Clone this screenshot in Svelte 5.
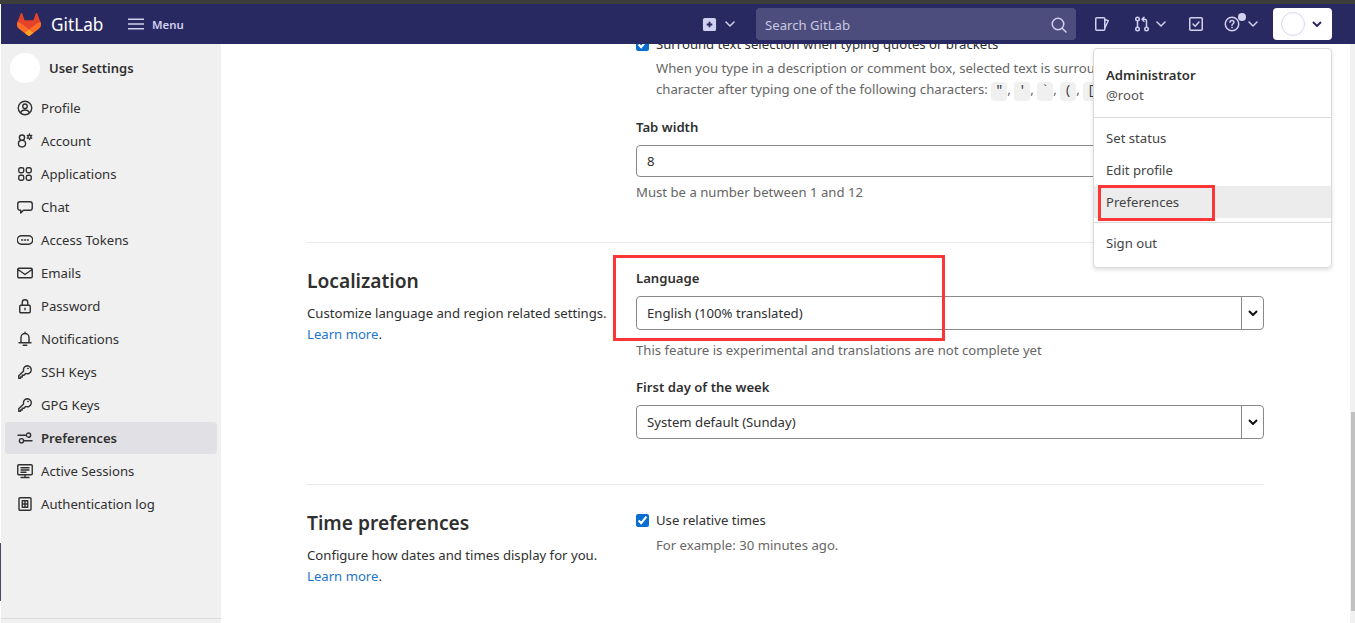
<script>
  const nav = [
    { label: "Profile", d: "M8 1.25a6.75 6.75 0 1 0 0 13.5 6.75 6.75 0 0 0 0-13.5zM8 4a2.25 2.25 0 1 1 0 4.5A2.25 2.25 0 0 1 8 4zM3.8 12.6C4.4 10.8 6 10 8 10s3.6.8 4.2 2.6" },
    { label: "Account", d: "M5 2a2.6 2.6 0 1 0 0 5.2A2.6 2.6 0 0 0 5 2zM5 7.2c-2.4 0-3.6 1.5-3.6 3.4 0 2 1 3.4 3.6 3.4s3.6-1.4 3.6-3.4c0-1.9-1.2-3.4-3.6-3.4zM12.5 2.2a1.6 1.6 0 1 0 0 3.2 1.6 1.6 0 0 0 0-3.2zM12.5 1v1.2M12.5 5.4v1.2M10.3 2.4l1 .6M13.7 4.6l1 .6M10.3 5.2l1-.6M13.7 3l1-.6" },
    { label: "Applications", d: "M3.5 1.75h1.5a1.75 1.75 0 0 1 1.75 1.75V5A1.75 1.75 0 0 1 5 6.75H3.5A1.75 1.75 0 0 1 1.75 5V3.5A1.75 1.75 0 0 1 3.5 1.75zM11 1.75h1.5a1.75 1.75 0 0 1 1.75 1.75V5a1.75 1.75 0 0 1-1.75 1.75H11A1.75 1.75 0 0 1 9.25 5V3.5A1.75 1.75 0 0 1 11 1.75zM3.5 9.25H5A1.75 1.75 0 0 1 6.75 11v1.5A1.75 1.75 0 0 1 5 14.25H3.5a1.75 1.75 0 0 1-1.75-1.75V11A1.75 1.75 0 0 1 3.5 9.25zM11 9.25h1.5A1.75 1.75 0 0 1 14.25 11v1.5a1.75 1.75 0 0 1-1.75 1.75H11a1.75 1.75 0 0 1-1.75-1.75V11A1.75 1.75 0 0 1 11 9.25z" },
    { label: "Chat", d: "M3 2.75h10A2.25 2.25 0 0 1 15.25 5v4A2.25 2.25 0 0 1 13 11.25H6.5L3.75 14v-2.75H3A2.25 2.25 0 0 1 .75 9V5A2.25 2.25 0 0 1 3 2.75z" },
    { label: "Access Tokens", d: "M4.5 3.75h7a4.25 4.25 0 0 1 0 8.5h-7a4.25 4.25 0 0 1 0-8.5zM4.6 8h1M7.5 8h1M10.4 8h1" },
    { label: "Emails", d: "M2 3.25h12c.7 0 1.25.55 1.25 1.25v7c0 .7-.55 1.25-1.25 1.25H2c-.7 0-1.25-.55-1.25-1.25v-7c0-.7.55-1.25 1.25-1.25zM1 4.5L8 9.5l7-5" },
    { label: "Password", d: "M3.75 7.25h8.5c.55 0 1 .45 1 1v5.5c0 .55-.45 1-1 1h-8.5c-.55 0-1-.45-1-1v-5.5c0-.55.45-1 1-1zM5.25 7.25V4.5a2.75 2.75 0 0 1 5.5 0v2.75M8 10.25v1.5" },
    { label: "Notifications", d: "M8 1.25v.75M4 11.75V6.5a4 4 0 0 1 8 0v5.25M2 11.75h12M6.25 14.25h3.5" },
    { label: "SSH Keys", d: "M10.25 1.75a4 4 0 1 1-1.6 7.66L7 11.25H5.25V13H3.5v1.25H1.75v-2.5l4.84-4.84a4 4 0 0 1 3.66-5.16zM10.75 4.5h.5" },
    { label: "GPG Keys", d: "M10.25 1.75a4 4 0 1 1-1.6 7.66L7 11.25H5.25V13H3.5v1.25H1.75v-2.5l4.84-4.84a4 4 0 0 1 3.66-5.16zM10.75 4.5h.5" },
    { label: "Preferences", d: "M1 5.25h8.5M11.5 3a2 2 0 1 0 0 4.25 2 2 0 0 0 0-4.25zM6.5 10.75H15M4.5 8.6a2.1 2.1 0 1 0 0 4.25 2.1 2.1 0 0 0 0-4.25z", active: true },
    { label: "Active Sessions", d: "M1.75 1.75h12.5c.55 0 1 .45 1 1v8c0 .55-.45 1-1 1H1.75c-.55 0-1-.45-1-1v-8c0-.55.45-1 1-1zM4 4.75h8M4 7h8M4 9.25h5M8 11.75v2.5M4 14.5h8" },
    { label: "Authentication log", d: "M3 1.75h10c.55 0 1 .45 1 1v10.5c0 .55-.45 1-1 1H3c-.55 0-1-.45-1-1V2.75c0-.55.45-1 1-1zM5.25 4.75h5.5v6.5h-5.5zM8 4.75v6.5M5.25 8h5.5" }
  ];
  const chars = ['"', "'", "`", "(", "["];
</script>

<div class="strip"></div>
<header class="navbar">
  <div class="brand">
    <svg class="logo" viewBox="0 0 25 24" width="24" height="23">
      <path fill="#e24329" d="M24.507 9.5l-.034-.09L21.082.562a.896.896 0 00-1.694.091l-2.29 7.01H7.825L5.535.653a.898.898 0 00-1.694-.09L.451 9.411.416 9.5a6.297 6.297 0 002.09 7.278l.012.01.03.022 5.16 3.867 2.56 1.935 1.554 1.176a1.051 1.051 0 001.268 0l1.555-1.176 2.56-1.935 5.197-3.89.014-.01A6.297 6.297 0 0024.507 9.5z"/>
      <path fill="#fc6d26" d="M24.507 9.5l-.034-.09a11.44 11.44 0 00-4.56 2.051l-7.447 5.632 4.742 3.584 5.197-3.89.014-.01A6.297 6.297 0 0024.507 9.5z"/>
      <path fill="#fca326" d="M7.707 20.677l2.56 1.935 1.555 1.176a1.051 1.051 0 001.268 0l1.555-1.176 2.56-1.935-4.743-3.584-4.755 3.584z"/>
      <path fill="#fc6d26" d="M5.01 11.461a11.43 11.43 0 00-4.56-2.05L.416 9.5a6.297 6.297 0 002.09 7.278l.012.01.03.022 5.16 3.867 4.745-3.584-7.444-5.632z"/>
    </svg>
    <span class="wordmark">GitLab</span>
  </div>
  <button class="menu-btn">
    <svg viewBox="0 0 16 16" width="16" height="16" class="stroke"><path d="M0 3.25h16M0 8h16M0 12.75h16"/></svg>
    <span>Menu</span>
  </button>

  <div class="nav-right">
    <span class="nav-item plus">
      <svg viewBox="0 0 16 16" width="15" height="15"><path fill="#d1d0ee" fill-rule="evenodd" d="M3 1h10a2 2 0 0 1 2 2v10a2 2 0 0 1-2 2H3a2 2 0 0 1-2-2V3a2 2 0 0 1 2-2zm4 4v2H5v2h2v2h2V9h2V7H9V5H7z"/></svg>
      <svg viewBox="0 0 10 6" width="10" height="6" class="stroke chev"><path d="M1 1l4 4 4-4"/></svg>
    </span>
    <div class="search">
      <span>Search GitLab</span>
      <svg viewBox="0 0 16 16" width="16" height="16" class="stroke"><path d="M7 1.25a5.75 5.75 0 1 0 0 11.5 5.75 5.75 0 0 0 0-11.5zM11.2 11.2l3.8 3.8"/></svg>
    </div>
    <span class="nav-item issues">
      <svg viewBox="0 0 16 16" width="16" height="16" class="stroke"><path d="M2.75 1.75h7c.55 0 1 .45 1 1v10.5c0 .55-.45 1-1 1h-7c-.55 0-1-.45-1-1V2.75c0-.55.45-1 1-1zM10.75 3.5l3.5 1.25-3.5 7.5"/></svg>
    </span>
    <span class="nav-item mrs">
      <svg viewBox="0 0 16 16" width="16" height="16" class="stroke"><path d="M3.5 1.25a1.75 1.75 0 1 0 0 3.5 1.75 1.75 0 0 0 0-3.5zM3.5 11.25a1.75 1.75 0 1 0 0 3.5 1.75 1.75 0 0 0 0-3.5zM12.5 11.25a1.75 1.75 0 1 0 0 3.5 1.75 1.75 0 0 0 0-3.5zM3.5 4.75v6.5M12.5 11.25V5c0-1-.7-1.75-1.75-1.75H8M10 1.25l-2 2 2 2"/></svg>
      <svg viewBox="0 0 10 6" width="10" height="6" class="stroke chev"><path d="M1 1l4 4 4-4"/></svg>
    </span>
    <span class="nav-item todos">
      <svg viewBox="0 0 16 16" width="16" height="16" class="stroke"><path d="M2.75 1.75h10.5c.55 0 1 .45 1 1v10.5c0 .55-.45 1-1 1H2.75c-.55 0-1-.45-1-1V2.75c0-.55.45-1 1-1zM5 8l2.2 2.2L11 6"/></svg>
    </span>
    <span class="nav-item help">
      <svg viewBox="0 0 16 16" width="16" height="16" class="stroke"><path d="M8 1.25a6.75 6.75 0 1 0 0 13.5 6.75 6.75 0 0 0 0-13.5zM6 6.3C6 5 7 4.4 8 4.4s2 .7 2 1.8c0 1.5-2 1.6-2 3.1M8 11.2v.6"/></svg>
      <i class="dot"></i>
      <svg viewBox="0 0 10 6" width="10" height="6" class="stroke chev"><path d="M1 1l4 4 4-4"/></svg>
    </span>
    <button class="user-btn">
      <span class="user-avatar"></span>
      <svg viewBox="0 0 10 6" width="10" height="6" class="user-chev"><path d="M1 1l4 4 4-4"/></svg>
    </button>
  </div>
</header>

<div class="layout">
  <aside class="sidebar">
    <div class="context">
      <span class="context-avatar"></span>
      <span>User Settings</span>
    </div>
    <nav>
      {#each nav as item}
        <a class="nav-link" class:active={item.active} href="#top">
          <svg viewBox="0 0 16 16" width="16" height="16"><path d={item.d}/></svg>
          <span>{item.label}</span>
        </a>
      {/each}
    </nav>
    <div class="collapse"></div>
  </aside>

  <main class="content">
    <div class="pane">
      <section class="row first">
        <div></div>
        <div>
          <label class="check">
            <input type="checkbox" checked />
            <span>Surround text selection when typing quotes or brackets</span>
          </label>
          <p class="check-help nowrap">
            When you type in a description or comment box, selected text is surrounded by the corresponding<br />
            character after typing one of the following characters:
            {#each chars as c, i}<code>{c}</code>{i < chars.length - 1 ? ", " : ""}{/each}
          </p>
          <div class="field tab-width">
            <div class="label">Tab width</div>
            <div class="input">8</div>
            <div class="hint">Must be a number between 1 and 12</div>
          </div>
        </div>
      </section>

      <section class="row">
        <div>
          <h4>Localization</h4>
          <p class="desc">Customize language and region related settings. <a href="#top">Learn more</a>.</p>
        </div>
        <div>
          <div class="field">
            <div class="label">Language</div>
            <div class="select">
              <span>English (100% translated)</span>
              <b><svg viewBox="0 0 10 6" width="10" height="6"><path d="M1 1l4 4 4-4"/></svg></b>
            </div>
            <div class="hint wide">This feature is experimental and translations are not complete yet</div>
          </div>
          <div class="field second">
            <div class="label">First day of the week</div>
            <div class="select">
              <span>System default (Sunday)</span>
              <b><svg viewBox="0 0 10 6" width="10" height="6"><path d="M1 1l4 4 4-4"/></svg></b>
            </div>
          </div>
        </div>
      </section>

      <section class="row">
        <div>
          <h4>Time preferences</h4>
          <p class="desc">Configure how dates and times display for you. <a href="#top">Learn more</a>.</p>
        </div>
        <div>
          <label class="check">
            <input type="checkbox" checked />
            <span>Use relative times</span>
          </label>
          <p class="check-help example">For example: 30 minutes ago.</p>
        </div>
      </section>
    </div>
    <div class="scrollbar"><i></i></div>
  </main>
</div>

<div class="dropdown">
  <div class="group">
    <div class="name">Administrator</div>
    <div class="handle">@root</div>
  </div>
  <div class="group links">
    <div class="link">Set status</div>
    <div class="link">Edit profile</div>
    <div class="link hover">Preferences</div>
  </div>
  <div class="group out">
    <div class="link">Sign out</div>
  </div>
</div>
<div class="mark mark-pref"></div>
<div class="mark mark-lang"></div>
<div class="sliver"></div>

<style>
  :global(body) {
    margin: 0;
    overflow: hidden;
    background: #fff;
    font-family: "Noto Sans", "Open Sans", sans-serif;
    font-size: 13.15px;
    color: #303030;
  }

  .strip {
    height: 4px;
    background: #3d3d3d;
  }

  .navbar {
    height: 40px;
    margin-left: 1px;
    display: flex;
    align-items: center;
    background: #292961;
    color: #d1d0ee;
  }

  .stroke {
    fill: none;
    stroke: #d1d0ee;
    stroke-width: 1.5;
    stroke-linecap: round;
    stroke-linejoin: round;
  }

  .brand {
    display: flex;
    align-items: center;
    gap: 10px;
    padding-left: 16px;
    width: 111px;
  }

  .wordmark {
    color: #fff;
    font-size: 17.2px;
  }

  .menu-btn {
    display: flex;
    align-items: center;
    gap: 8px;
    border: 0;
    padding: 0;
    background: none;
    color: #d1d0ee;
    font: 600 11.4px "Noto Sans", sans-serif;
  }

  .nav-right {
    margin-left: auto;
    display: flex;
    align-items: center;
    padding-right: 23px;
  }

  .nav-item {
    display: flex;
    align-items: center;
    position: relative;
  }

  .plus {
    gap: 8px;
    margin-right: 21px;
  }

  .search {
    width: 320px;
    height: 32px;
    box-sizing: border-box;
    padding: 1px 9px 0;
    display: flex;
    align-items: center;
    justify-content: space-between;
    border-radius: 4px;
    background: #4d4d7d;
    color: #c8c8e0;
  }

  .issues {
    margin-left: 18px;
  }

  .mrs {
    gap: 6px;
    margin-left: 24px;
  }

  .todos {
    margin-left: 22px;
  }

  .help {
    gap: 8px;
    margin-left: 20px;
  }

  .dot {
    position: absolute;
    left: 14px;
    top: -3px;
    width: 8px;
    height: 8px;
    border-radius: 50%;
    background: #d1d0ee;
  }

  .user-btn {
    margin-left: 15px;
    width: 59px;
    height: 32px;
    padding: 0 0 0 8px;
    display: flex;
    align-items: center;
    gap: 7px;
    border: 0;
    border-radius: 4px;
    background: #fff;
  }

  .user-avatar {
    width: 22px;
    height: 22px;
    border: 1px solid #d9d5ee;
    border-radius: 50%;
  }

  .user-chev {
    fill: none;
    stroke: #292961;
    stroke-width: 2;
  }

  .layout {
    height: 579px;
    display: flex;
  }

  .sidebar {
    width: 220px;
    margin-left: 1px;
    flex: none;
    display: flex;
    flex-direction: column;
    background: #f0f0f0;
  }

  .context {
    height: 30px;
    padding: 9px 0 0 9px;
    display: flex;
    align-items: center;
    gap: 9px;
    font-weight: 600;
    font-size: 13px;
    color: #303030;
  }

  .context-avatar {
    width: 30px;
    height: 30px;
    border-radius: 50%;
    background: #fff;
  }

  nav {
    margin-top: 9px;
    padding: 0 4px;
    display: flex;
    flex-direction: column;
    gap: 1px;
    flex: 1;
  }

  .nav-link {
    height: 32px;
    padding-left: 12px;
    display: flex;
    align-items: center;
    gap: 8px;
    border-radius: 4px;
    color: #303030;
    text-decoration: none;
  }

  .nav-link svg {
    fill: none;
    stroke: #303030;
    stroke-width: 1.4;
    stroke-linecap: round;
    stroke-linejoin: round;
  }

  .nav-link.active {
    background: #e1e1e5;
    font-weight: 600;
  }

  .collapse {
    height: 4px;
    border-top: 1px solid #dcdcdc;
  }

  .content {
    flex: 1;
    position: relative;
    overflow: hidden;
    display: flex;
  }

  .pane {
    width: 957px;
    margin-left: 86px;
    margin-top: -10px;
  }

  .scrollbar {
    margin-left: auto;
    width: 5px;
    background: #f1f1f1;
    display: flex;
    flex-direction: column;
    justify-content: flex-end;
    align-items: flex-end;
  }

  .scrollbar i {
    width: 4px;
    height: 199px;
    margin-bottom: 12px;
    background: #c1c1c1;
  }

  .row {
    display: grid;
    grid-template-columns: 329px 628px;
    padding: 25px 0 45px;
    border-top: 1px solid #e9e9e9;
  }

  .row.first {
    padding-top: 0;
    border-top: 0;
    padding-bottom: 40px;
  }

  h4 {
    margin: 0 0 9px;
    font-size: 19.2px;
    font-weight: 600;
    line-height: 26px;
    color: #303030;
  }

  .desc {
    margin: 0;
    width: 305px;
    line-height: 21px;
    color: #303030;
  }

  a {
    color: #1f75cb;
    text-decoration: none;
  }

  .check {
    display: flex;
    align-items: center;
    gap: 7px;
    height: 20px;
  }

  .check input {
    width: 13px;
    height: 13px;
    margin: 0;
    accent-color: #0a6ed1;
  }

  .check-help {
    margin: 4px 0 0 20px;
    line-height: 21px;
    color: #666;
    width: 608px;
  }

  .check-help.nowrap {
    white-space: nowrap;
  }

  .check-help.example {
    margin-top: 5px;
  }

  code {
    display: inline-block;
    width: 16px;
    border-radius: 4px;
    background: #f0f0f0;
    font: 12px/19px "Liberation Mono", monospace;
    color: #303030;
    text-align: center;
  }

  .tab-width {
    margin-top: 16px;
  }

  .second {
    margin-top: 17px;
  }

  .label {
    height: 20px;
    line-height: 20px;
    font-weight: 600;
    margin-bottom: 8px;
  }

  .input,
  .select {
    height: 32px;
    box-sizing: border-box;
    border: 1px solid #898989;
    border-radius: 4px;
    padding-left: 10px;
    line-height: 30px;
  }

  .select {
    height: 34px;
    display: flex;
    align-items: center;
    justify-content: space-between;
  }

  .select b {
    width: 21px;
    height: 100%;
    display: flex;
    align-items: center;
    justify-content: center;
    border-left: 1px solid #898989;
  }

  .select svg {
    fill: none;
    stroke: #111;
    stroke-width: 2;
  }

  .hint {
    margin-top: 5px;
    line-height: 20px;
    color: #666;
  }

  .hint.wide {
    margin-top: 10px;
  }

  .dropdown {
    position: absolute;
    left: 1093px;
    top: 48px;
    width: 237px;
    height: 218px;
    background: #fff;
    border: 1px solid #dbdbdb;
    border-radius: 4px;
    box-shadow: 0 2px 4px rgba(0, 0, 0, 0.12);
  }

  .group {
    border-bottom: 1px solid #dbdbdb;
  }

  .group:last-child {
    border-bottom: 0;
  }

  .group:first-child {
    height: 69px;
    box-sizing: border-box;
    padding: 16px 12px 0;
  }

  .name {
    line-height: 20px;
    font-weight: 600;
  }

  .handle {
    line-height: 20px;
    color: #555;
  }

  .links {
    padding: 4px 0;
  }

  .out {
    padding-top: 4px;
  }

  .link {
    height: 32px;
    line-height: 32px;
    padding-left: 12px;
    color: #444;
  }

  .link.hover {
    background: #ececec;
  }

  .mark {
    position: absolute;
    box-sizing: border-box;
    border: 3px solid #fb3636;
  }

  .mark-pref {
    left: 1098px;
    top: 185px;
    width: 117px;
    height: 36px;
  }

  .mark-lang {
    left: 613px;
    top: 255px;
    width: 332px;
    height: 86px;
  }

  .sliver {
    position: absolute;
    left: 0;
    top: 543px;
    width: 1px;
    height: 58px;
    background: #4a4a5e;
  }
</style>
